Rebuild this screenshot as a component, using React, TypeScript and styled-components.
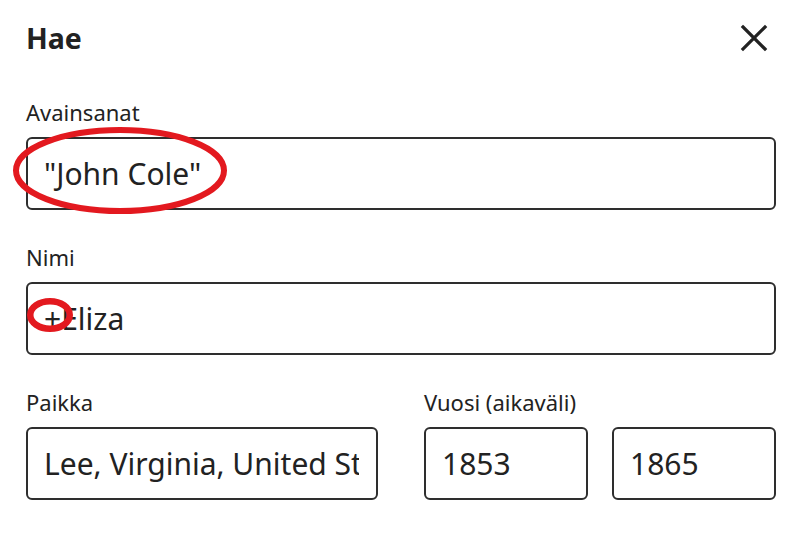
import styled, { createGlobalStyle } from "styled-components"

const ink = "#222222"
const annotationRed = "#e3191f"

const GlobalStyle = createGlobalStyle`
	html, body {
		margin: 0;
		padding: 0;
		background: #ffffff;
	}
	body {
		font-family: "Noto Sans", "Open Sans", sans-serif;
		color: ${ink};
	}
`

export default function App() {
	return (
		<>
			<GlobalStyle />
			<Panel>
				<Header>
					<Title>Hae</Title>
					<CloseButton aria-label="Sulje">
						<svg width="28" height="28" viewBox="0 0 28 28" fill="none">
							<path
								d="M3 3 L25 25 M25 3 L3 25"
								stroke={ink}
								strokeWidth="3.2"
								strokeLinecap="square"
							/>
						</svg>
					</CloseButton>
				</Header>

				<Form>
					<Field>
						<Label>Avainsanat</Label>
						<InputWrap>
							<TextInput readOnly value={'"John Cole"'} />
							<Ring $left={-13} $top={-10} $width={214} $height={87} $stroke={6} />
						</InputWrap>
					</Field>

					<Field>
						<Label>Nimi</Label>
						<InputWrap>
							<TextInput readOnly value="+Eliza" />
							<Ring $left={1} $top={16} $width={46} $height={34} $stroke={6.5} />
						</InputWrap>
					</Field>

					<Row>
						<Field>
							<Label>Paikka</Label>
							<InputWrap>
								<TextInput readOnly value="Lee, Virginia, United States" />
							</InputWrap>
						</Field>
						<Field>
							<Label>Vuosi (aikaväli)</Label>
							<YearPair>
								<TextInput readOnly value="1853" />
								<TextInput readOnly value="1865" />
							</YearPair>
						</Field>
					</Row>
				</Form>
			</Panel>
		</>
	)
}

function Ring({
	$left,
	$top,
	$width,
	$height,
	$stroke,
}: {
	$left: number
	$top: number
	$width: number
	$height: number
	$stroke: number
}) {
	const half = $stroke / 2
	return (
		<RingSvg
			style={{ left: $left, top: $top }}
			width={$width}
			height={$height}
			viewBox={`0 0 ${$width} ${$height}`}
		>
			<ellipse
				cx={$width / 2}
				cy={$height / 2}
				rx={$width / 2 - half}
				ry={$height / 2 - half}
				fill="none"
				stroke={annotationRed}
				strokeWidth={$stroke}
			/>
		</RingSvg>
	)
}

const Panel = styled.div`
	width: 800px;
	height: 537px;
	box-sizing: border-box;
	padding: 18px 24px 0 26px;
	overflow: hidden;
`

const Header = styled.div`
	display: flex;
	align-items: center;
	justify-content: space-between;
	height: 40px;
	margin-bottom: 40px;
`

const Title = styled.h1`
	margin: 0;
	font-size: 28.5px;
	font-weight: 700;
	line-height: 40px;
	color: ${ink};
`

const CloseButton = styled.button`
	display: flex;
	align-items: center;
	justify-content: center;
	width: 32px;
	height: 32px;
	margin-right: 6px;
	padding: 0;
	border: none;
	background: none;
	cursor: pointer;
`

const Form = styled.div`
	display: flex;
	flex-direction: column;
	gap: 33px;
`

const Row = styled.div`
	display: grid;
	grid-template-columns: 352px 1fr;
	gap: 46px;
`

const Field = styled.div`
	display: flex;
	flex-direction: column;
`

const Label = styled.label`
	font-size: 22px;
	line-height: 28px;
	margin-bottom: 11px;
	color: ${ink};
`

const InputWrap = styled.div`
	position: relative;
`

const YearPair = styled.div`
	display: grid;
	grid-template-columns: 1fr 1fr;
	gap: 24px;
`

const TextInput = styled.input`
	display: block;
	width: 100%;
	height: 73px;
	box-sizing: border-box;
	padding: 0 17px 0 16px;
	border: 2px solid #2e2e2e;
	border-radius: 6px;
	background: #ffffff;
	font-family: "Noto Sans", "Open Sans", sans-serif;
	font-size: 30px;
	color: ${ink};
	outline: none;
`

const RingSvg = styled.svg`
	position: absolute;
	pointer-events: none;
	overflow: visible;
`
